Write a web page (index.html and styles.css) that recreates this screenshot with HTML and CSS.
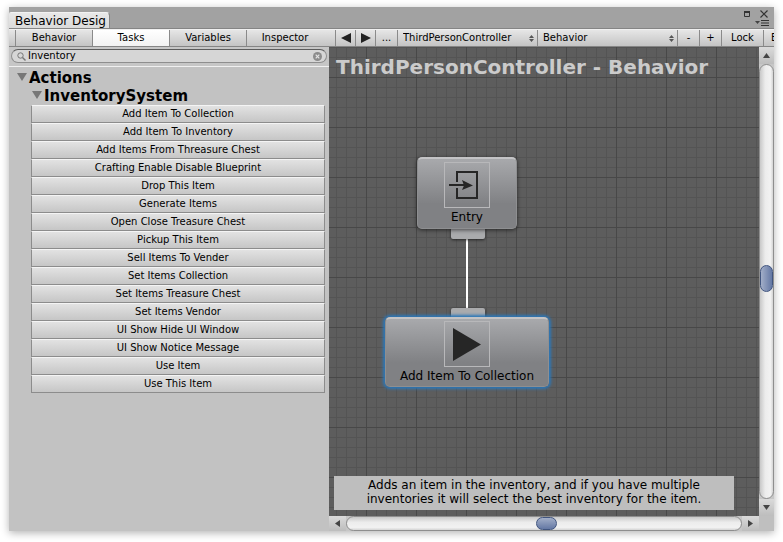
FILE: index.html
```html
<!DOCTYPE html>
<html lang="en">
<head>
<meta charset="utf-8">
<title>Behavior Designer</title>
<link rel="stylesheet" href="styles.css">
</head>
<body>
<main class="window">
  <header class="titlebar">
    <h1 class="window-tab">Behavior Desig</h1>
    <div class="window-controls">
      <div class="control-row">
        <button class="icon-button" aria-label="Maximize"><svg width="6" height="6" viewBox="0 0 6 6"><path d="M.5 1h5v4.500h-5z" fill="none" stroke="#333"/><path d="M0 1h6" stroke="#333" stroke-width="2"/></svg></button>
        <button class="icon-button" aria-label="Close"><svg width="8" height="8" viewBox="0 0 8 8"><path d="M.5.5l7 7M7.500.5l-7 7" stroke="#333" stroke-width="1.200"/></svg></button>
      </div>
      <button class="icon-button" aria-label="Window menu"><svg width="14" height="6" viewBox="0 0 14 6"><path d="M0 1h5L2.500 4z" fill="#444"/><path d="M6 .5h8M6 3h8M6 5.500h8" stroke="#333"/></svg></button>
    </div>
  </header>

  <nav class="toolbar">
    <div class="toolbar-tabs">
      <button class="tool tab">Behavior</button>
      <button class="tool tab active">Tasks</button>
      <button class="tool tab">Variables</button>
      <button class="tool tab">Inspector</button>
    </div>
    <button class="tool arrow" aria-label="Previous"><svg width="10" height="10" viewBox="0 0 10 10"><path d="M10 0v10L0 5z" fill="#222"/></svg></button>
    <button class="tool arrow" aria-label="Next"><svg width="10" height="10" viewBox="0 0 10 10"><path d="M0 0v10l10-5z" fill="#222"/></svg></button>
    <button class="tool more">...</button>
    <label class="tool picker">
      <select aria-label="Object"><option>ThirdPersonController</option></select>
      <svg width="5" height="7" viewBox="0 0 5 7"><path d="M0 3l2.500-3L5 3zM0 4h5L2.500 7z" fill="#555"/></svg>
    </label>
    <label class="tool picker">
      <select aria-label="Behavior"><option>Behavior</option></select>
      <svg width="5" height="7" viewBox="0 0 5 7"><path d="M0 3l2.500-3L5 3zM0 4h5L2.500 7z" fill="#555"/></svg>
    </label>
    <button class="tool small">-</button>
    <button class="tool small">+</button>
    <button class="tool lock">Lock</button>
    <button class="tool export">Export</button>
  </nav>

  <div class="workspace">
    <aside class="sidebar">
      <div class="search-row">
        <div class="search">
          <svg width="9" height="9" viewBox="0 0 9 9"><circle cx="3.500" cy="3.500" r="2.700" fill="none" stroke="#777"/><path d="M5.500 5.500l3 3" stroke="#777" stroke-width="1.400"/></svg>
          <input type="text" value="Inventory" aria-label="Search tasks">
          <button class="icon-button" aria-label="Clear search"><svg width="9" height="9" viewBox="0 0 9 9"><circle cx="4.500" cy="4.500" r="4.500" fill="#8b8b8b"/><path d="M2.700 2.700l3.600 3.600M6.300 2.700L2.700 6.300" stroke="#e4e4e4" stroke-width="1.200"/></svg></button>
        </div>
      </div>
      <h2 class="fold"><svg width="10" height="8" viewBox="0 0 10 8"><path d="M0 0h10L5 8z" fill="#777"/></svg>Actions</h2>
      <h3 class="fold nested"><svg width="10" height="8" viewBox="0 0 10 8"><path d="M0 0h10L5 8z" fill="#777"/></svg>InventorySystem</h3>
      <div class="tasks">
        <button class="task">Add Item To Collection</button>
        <button class="task">Add Item To Inventory</button>
        <button class="task">Add Items From Threasure Chest</button>
        <button class="task">Crafting Enable Disable Blueprint</button>
        <button class="task">Drop This Item</button>
        <button class="task">Generate Items</button>
        <button class="task">Open Close Treasure Chest</button>
        <button class="task">Pickup This Item</button>
        <button class="task">Sell Items To Vender</button>
        <button class="task">Set Items Collection</button>
        <button class="task">Set Items Treasure Chest</button>
        <button class="task">Set Items Vendor</button>
        <button class="task">UI Show Hide UI Window</button>
        <button class="task">UI Show Notice Message</button>
        <button class="task">Use Item</button>
        <button class="task">Use This Item</button>
      </div>
    </aside>

    <section class="viewport">
      <div class="canvas">
        <h2 class="graph-title">ThirdPersonController - Behavior</h2>
        <div class="link"></div>
        <div class="port port-out"></div>
        <div class="port port-in"></div>
        <div class="node entry">
          <div class="node-icon"><svg width="44" height="44" viewBox="0 0 44 44"><path d="M12 19V9h20v26H12V25" fill="none" stroke="#262626" stroke-width="2"/><path d="M4 22h15" stroke="#262626" stroke-width="2"/><path d="M17 17l11 5.500L17 27l2-4.500z" fill="#262626"/></svg></div>
          <span>Entry</span>
        </div>
        <div class="node action">
          <div class="node-icon"><svg width="44" height="44" viewBox="0 0 44 44"><path d="M8 6v33l28-16.500z" fill="#262626"/></svg></div>
          <span>Add Item To Collection</span>
        </div>
        <p class="description">Adds an item in the inventory, and if you have multiple<br>inventories it will select the best inventory for the item.</p>
      </div>
      <div class="scroll vertical">
        <button class="scroll-arrow" aria-label="Scroll up"><svg width="7" height="5" viewBox="0 0 7 5"><path d="M0 5h7L3.500 0z" fill="#444"/></svg></button>
        <div class="track"><div class="thumb"></div></div>
        <button class="scroll-arrow" aria-label="Scroll down"><svg width="7" height="5" viewBox="0 0 7 5"><path d="M0 0h7L3.500 5z" fill="#444"/></svg></button>
      </div>
      <div class="scroll horizontal">
        <button class="scroll-arrow" aria-label="Scroll left"><svg width="5" height="7" viewBox="0 0 5 7"><path d="M5 0v7L0 3.500z" fill="#444"/></svg></button>
        <div class="track"><div class="thumb"></div></div>
        <button class="scroll-arrow" aria-label="Scroll right"><svg width="5" height="7" viewBox="0 0 5 7"><path d="M0 0v7l5-3.500z" fill="#444"/></svg></button>
      </div>
      <div class="corner"></div>
    </section>
  </div>
</main>
</body>
</html>
```
FILE: styles.css
```css
* { box-sizing: border-box; }

body {
  margin: 0;
  padding: 7px 9px 11px;
  min-height: 100vh;
  display: flex;
  background: #fff;
  color: #000;
  font: 10px/16px "DejaVu Sans", Verdana, sans-serif;
}

h1, h2, h3, p { margin: 0; }
button, input, select { font: inherit; color: inherit; margin: 0; padding: 0; }
button { border: 0; background: none; }
svg { display: block; flex: none; }

.window {
  flex: 1;
  min-width: 0;
  display: flex;
  flex-direction: column;
  background: #c2c2c2;
  box-shadow: 0 2px 8px rgba(0, 0, 0, .3);
}

.titlebar {
  height: 22px;
  display: flex;
  justify-content: space-between;
  align-items: flex-end;
  background: #a2a2a2;
  border-bottom: 1px solid #858585;
}
.window-tab {
  height: 16px;
  padding: 0 3px 0 6px;
  background: linear-gradient(#e8e8e8, #dadada);
  border-right: 1px solid #858585;
  border-top: 1px solid #f2f2f2;
  border-radius: 2px 4px 0 0;
  font-size: 12px;
  font-weight: normal;
  line-height: 16px;
}
.window-controls {
  align-self: stretch;
  padding: 3px 5px 2px 0;
  display: flex;
  flex-direction: column;
  justify-content: space-between;
  align-items: flex-end;
}
.control-row { display: flex; align-items: center; gap: 10px; padding-right: 1px; }
.icon-button { display: block; }

.toolbar {
  height: 18px;
  display: flex;
  overflow: hidden;
  background: linear-gradient(#e6e6e6, #c4c4c4);
  border-top: 1px solid #f0f0f0;
  border-bottom: 1px solid #858585;
}
.toolbar-tabs { flex: none; width: 326px; padding-left: 6px; display: flex; }
.tool {
  flex: none;
  display: flex;
  align-items: center;
  justify-content: center;
  border-left: 1px solid #8a8a8a;
}
.tab { width: 77px; }
.tab.active { background: linear-gradient(#fff, #f2f2f2); }
.arrow { width: 20px; }
.more { width: 22px; }
.small { width: 22px; }
.lock { width: 42px; }
.export { padding-left: 7px; }
.picker { width: 140px; padding: 0 3px 0 5px; }
.picker select {
  flex: 1;
  min-width: 0;
  appearance: none;
  border: 0;
  background: none;
}

.workspace { flex: 1; display: flex; }
.sidebar { flex: none; width: 320px; }
.search-row {
  height: 20px;
  padding: 2px 2px 3px;
  background: #c6c6c6;
  border-bottom: 1px solid #f0f0f0;
}
.search {
  height: 14px;
  padding: 0 4px 0 5px;
  display: flex;
  align-items: center;
  gap: 2px;
  background: #d6d6d6;
  border: 1px solid #8e8e8e;
  border-top-color: #5c5c5c;
  border-radius: 7px;
}
.search input {
  flex: 1;
  min-width: 0;
  height: 12px;
  border: 0;
  background: none;
  outline: 0;
}
.fold {
  display: flex;
  align-items: center;
  gap: 2px;
  height: 18px;
  padding-left: 8px;
  font-size: 15px;
  line-height: 18px;
}
.sidebar h2.fold { margin-top: 2px; }
.fold svg { margin-bottom: 2px; }
.nested { padding-left: 23px; }
.tasks { padding: 0 4px 0 22px; }
.task {
  display: block;
  width: 100%;
  height: 18px;
  background: linear-gradient(#e2e2e2, #c6c6c6);
  border: 1px solid #8c8c8c;
  border-top-color: #f4f4f4;
  line-height: 16px;
}

.viewport {
  flex: 1;
  min-width: 0;
  display: grid;
  grid-template: 1fr 15px / 1fr 15px;
}
.canvas {
  position: relative;
  overflow: hidden;
  display: flex;
  flex-direction: column;
  justify-content: space-between;
  padding: 7px 25px 6px 5px;
  background-color: #5d5d5d;
  background-image:
    linear-gradient(90deg, #484848 1px, transparent 1px),
    linear-gradient(#484848 1px, transparent 1px),
    linear-gradient(90deg, #545454 1px, transparent 1px),
    linear-gradient(#545454 1px, transparent 1px);
  background-size: 50px 50px, 50px 50px, 10px 10px, 10px 10px;
  background-position: 37px 30px, 37px 30px, 7px 0, 7px 0;
}
.graph-title {
  padding-left: 2px;
  color: #cbcbcb;
  font-size: 20px;
  line-height: 26px;
  white-space: nowrap;
}
.description {
  padding: 2px 0 4px;
  background: #bebebe;
  font-size: 12px;
  line-height: 14px;
  text-align: center;
  white-space: nowrap;
}

.node {
  position: absolute;
  height: 72px;
  display: flex;
  flex-direction: column;
  align-items: center;
  background: linear-gradient(#a8a9ac, #808184 65%);
  border: 1px solid #8e8f91;
  border-top: 2px solid #c4c4c6;
  border-radius: 5px;
  box-shadow: 0 1px 4px rgba(0, 0, 0, .6);
  font-size: 12px;
  line-height: 16px;
  padding-top: 3px;
}
.node-icon { border: 1px solid #b8b8ba; margin-bottom: 1px; }
.entry { left: 88px; top: 110px; width: 100px; }
.action {
  left: 56px;
  top: 270px;
  width: 164px;
  height: 70px;
  padding-top: 2px;
  box-shadow: 0 0 3px 2px #2c77b8;
}
.port {
  position: absolute;
  left: 122px;
  width: 34px;
  height: 12px;
  background: #aaabad;
  border-radius: 2px;
  box-shadow: 0 1px 3px rgba(0, 0, 0, .6);
}
.port-out { top: 180px; }
.port-in { top: 261px; }
.link {
  position: absolute;
  left: 137px;
  top: 190px;
  width: 2px;
  height: 73px;
  background: #fff;
}

.scroll { display: flex; background: #c6c6c6; }
.vertical { flex-direction: column; }
.scroll-arrow {
  flex: none;
  width: 17px;
  display: flex;
  align-items: center;
  justify-content: center;
  background: linear-gradient(#dadada, #bdbdbd);
}
.vertical .scroll-arrow { width: 15px; height: 17px; }
.track {
  flex: 1;
  position: relative;
  border: 1px solid #8e8e8e;
  border-radius: 8px;
}
.vertical .track { background: linear-gradient(90deg, #c8c8c8, #ececec 40%, #f2f2f2 80%, #d4d4d4); }
.horizontal .track { background: linear-gradient(#c8c8c8, #ececec 40%, #f2f2f2 80%, #d4d4d4); }
.thumb {
  position: absolute;
  border: 1px solid #41557f;
  border-radius: 7px;
}
.vertical .thumb { top: 200px; left: 0; width: 13px; height: 27px; background: linear-gradient(90deg, #a2aec8, #6478a4); }
.horizontal .thumb { left: 189px; top: 0; width: 21px; height: 13px; background: linear-gradient(#a2aec8, #6478a4); }
.corner { background: #bfbfbf; }
```
